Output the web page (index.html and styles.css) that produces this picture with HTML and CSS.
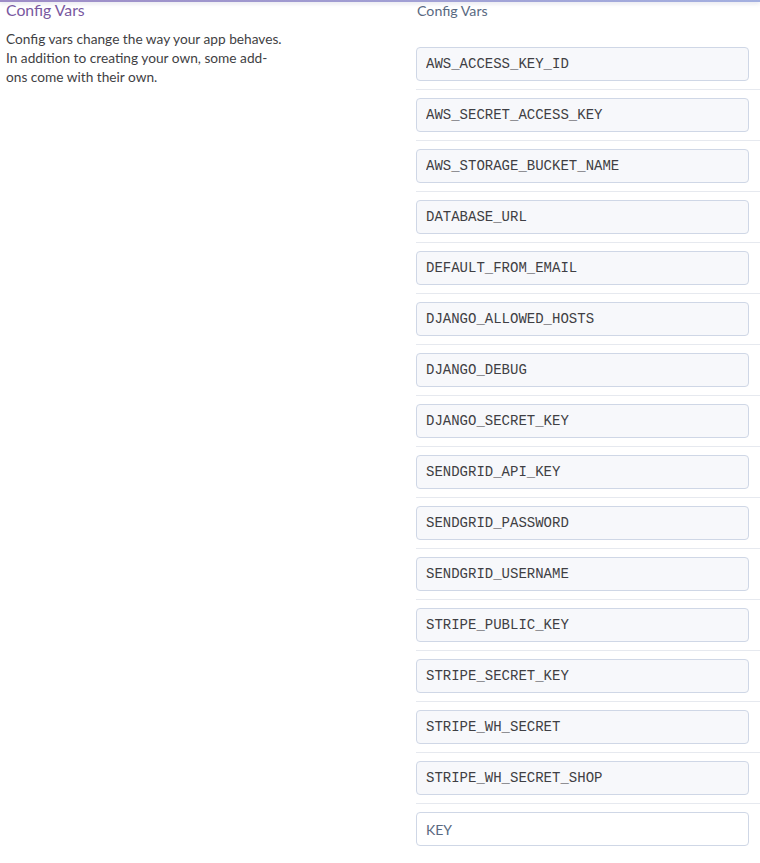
FILE: index.html
```html
<!DOCTYPE html>
<html>
<head>
<meta charset="utf-8">
<link rel="stylesheet" href="styles.css">
</head>
<body>
<div class="topbar"></div>
<div class="page">
  <div class="intro">
    <h2 class="title">Config Vars</h2>
    <p class="desc">Config vars change the way your app behaves.<br>In addition to creating your own, some add-<br>ons come with their own.</p>
  </div>
  <div class="vars">
    <div class="label">Config Vars</div>
    <div class="list">
      <div class="row"><input class="key" value="AWS_ACCESS_KEY_ID"></div>
      <div class="row"><input class="key" value="AWS_SECRET_ACCESS_KEY"></div>
      <div class="row"><input class="key" value="AWS_STORAGE_BUCKET_NAME"></div>
      <div class="row"><input class="key" value="DATABASE_URL"></div>
      <div class="row"><input class="key" value="DEFAULT_FROM_EMAIL"></div>
      <div class="row"><input class="key" value="DJANGO_ALLOWED_HOSTS"></div>
      <div class="row"><input class="key" value="DJANGO_DEBUG"></div>
      <div class="row"><input class="key" value="DJANGO_SECRET_KEY"></div>
      <div class="row"><input class="key" value="SENDGRID_API_KEY"></div>
      <div class="row"><input class="key" value="SENDGRID_PASSWORD"></div>
      <div class="row"><input class="key" value="SENDGRID_USERNAME"></div>
      <div class="row"><input class="key" value="STRIPE_PUBLIC_KEY"></div>
      <div class="row"><input class="key" value="STRIPE_SECRET_KEY"></div>
      <div class="row"><input class="key" value="STRIPE_WH_SECRET"></div>
      <div class="row"><input class="key" value="STRIPE_WH_SECRET_SHOP"></div>
      <div class="row new"><input class="key empty" placeholder="KEY"></div>
    </div>
  </div>
</div>
</body>
</html>
```
FILE: styles.css
```css
html, body {
  margin: 0;
  padding: 0;
  background: #ffffff;
  font-family: Lato, "Open Sans", sans-serif;
}
.topbar {
  height: 2px;
  background: linear-gradient(90deg, #9d8cc6, #a4b0e0);
  box-shadow: 0 1px 4px rgba(120, 120, 160, 0.35);
}
.page {
  display: grid;
  grid-template-columns: 410px 344px;
  padding-left: 6px;
}
.title {
  margin: 0;
  font-weight: 400;
  font-size: 15.8px;
  line-height: 16px;
  color: #79589f;
}
.desc {
  margin: 11px 0 0;
  font-size: 13.7px;
  line-height: 19px;
  color: #3f3f44;
}
.label {
  margin: 0 0 0 1px;
  font-size: 14.2px;
  line-height: 18px;
  color: #596981;
}
.list {
  margin-top: 19px;
}
.row {
  padding: 8px 11px 8px 0;
  border-bottom: 1px solid #e6e9ef;
}
.row.new {
  border-bottom: none;
}
.key {
  display: block;
  box-sizing: border-box;
  width: 333px;
  height: 34px;
  margin: 0;
  padding: 0 9px;
  border: 1px solid #cfd7e6;
  border-radius: 4px;
  background: #f7f8fb;
  font-family: "Liberation Mono", monospace;
  font-size: 14px;
  color: #3f3f44;
  outline: none;
}
.key.empty {
  background: #ffffff;
  font-family: Lato, "Open Sans", sans-serif;
}
.key.empty::placeholder {
  color: #596981;
  font-family: Lato, "Open Sans", sans-serif;
}
```
